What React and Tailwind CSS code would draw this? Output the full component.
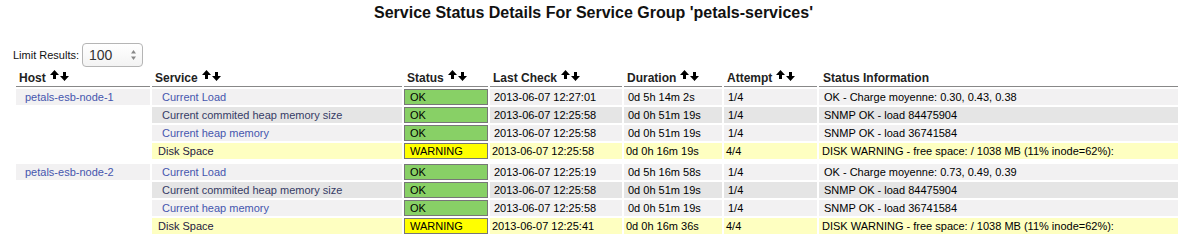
import React from 'react';

const SortArrows = () => (
    <span className="inline-flex items-start gap-[1px] ml-[4px] align-top mt-[1px]">
        <svg width="9" height="10" viewBox="0 0 9 10" className="-mt-[1px]">
            <path d="M4.5 0 L9 5 L6 5 L6 9 L3 9 L3 5 L0 5 Z" fill="#000" />
        </svg>
        <svg width="9" height="10" viewBox="0 0 9 10" className="mt-[1px]">
            <path d="M4.5 9 L9 4 L6 4 L6 0 L3 0 L3 4 L0 4 Z" fill="#000" />
        </svg>
    </span>
);

const groups = [
    {
        host: 'petals-esb-node-1',
        rows: [
            { service: 'Current Load', status: 'OK', last: '2013-06-07 12:27:01', duration: '0d 5h 14m 2s', attempt: '1/4', info: 'OK - Charge moyenne: 0.30, 0.43, 0.38' },
            { service: 'Current commited heap memory size', status: 'OK', last: '2013-06-07 12:25:58', duration: '0d 0h 51m 19s', attempt: '1/4', info: 'SNMP OK - load 84475904' },
            { service: 'Current heap memory', status: 'OK', last: '2013-06-07 12:25:58', duration: '0d 0h 51m 19s', attempt: '1/4', info: 'SNMP OK - load 36741584' },
            { service: 'Disk Space', status: 'WARNING', last: '2013-06-07 12:25:58', duration: '0d 0h 16m 19s', attempt: '4/4', info: 'DISK WARNING - free space: / 1038 MB (11% inode=62%):' },
        ],
    },
    {
        host: 'petals-esb-node-2',
        rows: [
            { service: 'Current Load', status: 'OK', last: '2013-06-07 12:25:19', duration: '0d 5h 16m 58s', attempt: '1/4', info: 'OK - Charge moyenne: 0.73, 0.49, 0.39' },
            { service: 'Current commited heap memory size', status: 'OK', last: '2013-06-07 12:25:58', duration: '0d 0h 51m 19s', attempt: '1/4', info: 'SNMP OK - load 84475904' },
            { service: 'Current heap memory', status: 'OK', last: '2013-06-07 12:25:58', duration: '0d 0h 51m 19s', attempt: '1/4', info: 'SNMP OK - load 36741584' },
            { service: 'Disk Space', status: 'WARNING', last: '2013-06-07 12:25:41', duration: '0d 0h 16m 36s', attempt: '4/4', info: 'DISK WARNING - free space: / 1038 MB (11% inode=62%):' },
        ],
    },
];

const headers = ['Host', 'Service', 'Status', 'Last Check', 'Duration', 'Attempt'];

const ServiceRow = ({ host, row, index }) => {
    const warn = row.status === 'WARNING';
    const bg = warn ? 'bg-[#feffc1]' : index % 2 === 1 ? 'bg-[#e5e5e5]' : 'bg-[#f2f1f2]';
    const pad = warn ? 'pl-[2px]' : 'pl-[4px]';
    const linkColor = warn ? 'text-[#1f2040]' : index % 2 === 1 ? 'text-[#363c66]' : 'text-[#4656ae]';

    return (
        <tr>
            <td className={`h-[16px] p-0 pl-[9px] ${host ? 'bg-[#f2f1f2] text-[#4656ae]' : ''}`}>{host}</td>
            <td className={`h-[16px] p-0 ${warn ? 'pl-[6px]' : 'pl-[10px]'} ${bg} ${linkColor}`}>{row.service}</td>
            <td className={`h-[16px] p-0 pl-[5px] border border-[#777] ${warn ? 'bg-[#ffff00]' : 'bg-[#88d066]'}`}>{row.status}</td>
            <td className={`h-[16px] p-0 ${pad} ${bg}`}>{row.last}</td>
            <td className={`h-[16px] p-0 ${pad} ${bg}`}>{row.duration}</td>
            <td className={`h-[16px] p-0 ${pad} ${bg}`}>{row.attempt}</td>
            <td className={`h-[16px] p-0 ${warn ? 'pl-[3px]' : 'pl-[5px]'} ${bg}`}>{row.info}</td>
        </tr>
    );
};

const App = () => {
    return (
        <div className="w-[1187px] h-[244px] bg-white overflow-hidden font-['Liberation_Sans',Arial,sans-serif] text-black">
            <div className="h-[43px] pt-[4px] text-center">
                <h1 className="text-[16px] leading-[18px] font-bold text-[#111]">
                    Service Status Details For Service Group 'petals-services'
                </h1>
            </div>

            <div className="flex items-center h-[24px] pl-[13px] text-[11px] text-[#111]">
                <span>Limit Results:</span>
                <div className="ml-[3px] w-[61px] h-[24px] rounded-[4px] border border-[#b5b5b5] bg-gradient-to-b from-white to-[#f3f3f3] flex items-center justify-between pl-[6px] pr-[5px]">
                    <span className="text-[14px] text-[#333]">100</span>
                    <svg width="7" height="14" viewBox="0 0 7 14">
                        <path d="M3.5 2 L6 5.5 L1 5.5 Z" fill="#888" />
                        <path d="M3.5 12 L6 8.5 L1 8.5 Z" fill="#888" />
                    </svg>
                </div>
            </div>

            <table className="table-fixed border-separate border-spacing-[2px] ml-[14px] w-[1166px] text-[11px] leading-[14px]">
                <colgroup>
                    <col className="w-[134px]" />
                    <col className="w-[250px]" />
                    <col className="w-[84px]" />
                    <col className="w-[132px]" />
                    <col className="w-[98px]" />
                    <col className="w-[93px]" />
                    <col className="w-[359px]" />
                </colgroup>
                <thead>
                    <tr>
                        {headers.map((h) => (
                            <th key={h} className="h-[18px] p-0 px-[3px] text-left align-middle text-[12px] leading-[16px] font-bold text-[#222] border-b border-[#888] whitespace-nowrap">
                                {h}<SortArrows />
                            </th>
                        ))}
                        <th className="h-[18px] p-0 px-[4px] text-left text-[12px] leading-[16px] font-bold text-[#222] border-b border-[#888]">
                            Status Information
                        </th>
                    </tr>
                </thead>
                <tbody>
                    {groups.map((g, gi) => (
                        <React.Fragment key={g.host}>
                            {gi > 0 && (
                                <tr>
                                    <td colSpan={7} className="h-[1px] p-0"></td>
                                </tr>
                            )}
                            {g.rows.map((r, i) => (
                                <ServiceRow key={i} host={i === 0 ? g.host : ''} row={r} index={i} />
                            ))}
                        </React.Fragment>
                    ))}
                </tbody>
            </table>
        </div>
    );
};

export default App;
